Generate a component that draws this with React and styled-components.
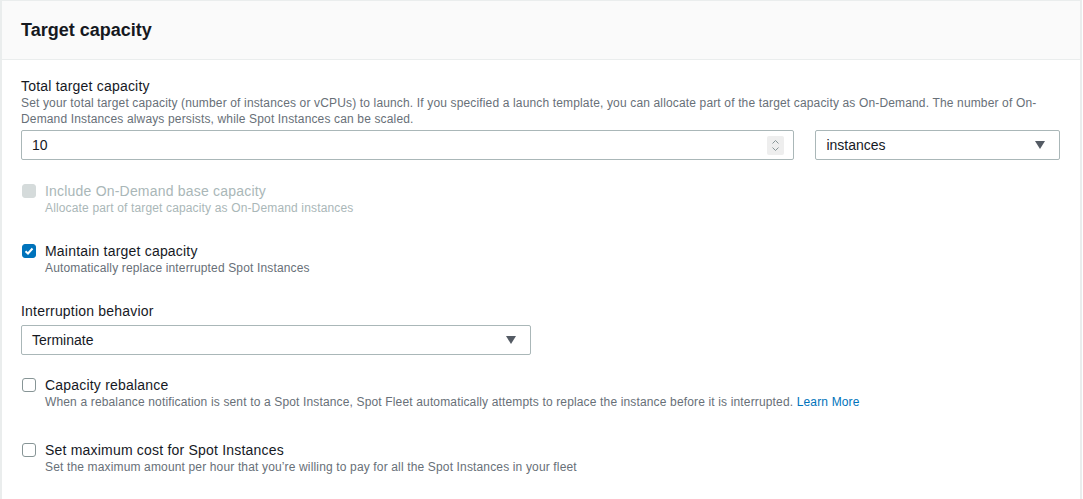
import styled, { createGlobalStyle } from "styled-components";

const GlobalStyle = createGlobalStyle`
  html, body {
    margin: 0;
    padding: 0;
    background: #ffffff;
  }
  body {
    font-family: "Liberation Sans", Arial, sans-serif;
    color: #16191f;
  }
`;

const Panel = styled.section`
  width: 1082px;
  height: 499px;
  box-sizing: border-box;
  border: 1px solid #eaeded;
  border-left-width: 2px;
  border-right-width: 2px;
  border-bottom: none;
  overflow: hidden;
`;

const Header = styled.header`
  height: 59px;
  box-sizing: border-box;
  background: #fafafa;
  border-bottom: 1px solid #eaeded;
  padding: 0 19px;
  display: flex;
  align-items: center;
`;

const Title = styled.h2`
  margin: 0;
  font-size: 18px;
  font-weight: 700;
  color: #16191f;
`;

const Body = styled.div`
  padding: 17px 20px 0 19px;
  display: flex;
  flex-direction: column;
`;

const Field = styled.div`
  display: flex;
  flex-direction: column;
  margin-bottom: ${(p) => p.gap || 0}px;
`;

const Label = styled.div`
  font-size: 14px;
  line-height: 18px;
  letter-spacing: 0.2px;
  color: #16191f;
`;

const Hint = styled.div`
  font-size: 12px;
  line-height: 16px;
  letter-spacing: 0.15px;
  color: #687078;
`;

const InputRow = styled.div`
  display: flex;
  gap: 21px;
  margin-top: ${(p) => p.top || 3}px;
`;

const Box = styled.div`
  height: 30px;
  box-sizing: border-box;
  border: 1px solid #aab7b8;
  border-radius: 2px;
  display: flex;
  align-items: center;
  justify-content: space-between;
  padding: 0 10px;
  font-size: 14px;
  color: #16191f;
  width: ${(p) => p.w}px;
  background: #fff;
`;

const Spinner = styled.span`
  width: 17px;
  height: 19px;
  background: #eeeeee;
  border-radius: 2px;
  display: flex;
  align-items: center;
  justify-content: center;
  margin-right: -1px;
`;

const Arrow = styled.span`
  width: 0;
  height: 0;
  border-left: 5px solid transparent;
  border-right: 5px solid transparent;
  border-top: 8px solid #545b64;
  margin-right: 4px;
`;

const CheckRow = styled.label`
  display: flex;
  gap: 9px;
  align-items: flex-start;
  margin-bottom: ${(p) => p.gap || 0}px;
`;

const Check = styled.span`
  flex: none;
  width: 14px;
  height: 14px;
  box-sizing: border-box;
  margin-top: 2px;
  margin-left: 1px;
  border-radius: 3px;
  display: flex;
  align-items: center;
  justify-content: center;
  border: ${(p) =>
    p.checked ? "1px solid #0073bb" : p.disabled ? "1px solid #d5dbdb" : "1px solid #879596"};
  background: ${(p) => (p.checked ? "#0073bb" : p.disabled ? "#d5dbdb" : "#fff")};
`;

const CheckText = styled.div`
  display: flex;
  flex-direction: column;
  ${Label}, ${Hint} {
    color: ${(p) => (p.disabled ? "#aab7b8" : undefined)};
  }
`;

const Link = styled.a`
  color: #0073bb;
  text-decoration: none;
`;

function Checkbox({ checked, disabled, label, hint, gap }) {
  return (
    <CheckRow gap={gap}>
      <Check checked={checked} disabled={disabled}>
        {checked && (
          <svg width="10" height="10" viewBox="0 0 10 10">
            <path d="M1.5 5.2 L4 7.5 L8.5 2.5" fill="none" stroke="#fff" strokeWidth="2" />
          </svg>
        )}
      </Check>
      <CheckText disabled={disabled}>
        <Label>{label}</Label>
        <Hint>{hint}</Hint>
      </CheckText>
    </CheckRow>
  );
}

export default function App() {
  return (
    <>
      <GlobalStyle />
      <Panel>
        <Header>
          <Title>Target capacity</Title>
        </Header>
        <Body>
          <Field gap={22}>
            <Label>Total target capacity</Label>
            <Hint>
              Set your total target capacity (number of instances or vCPUs) to launch. If you specified a
              launch template, you can allocate part of the target capacity as On-Demand. The number of On-Demand
              Instances always persists, while Spot Instances can be scaled.
            </Hint>
            <InputRow top={3}>
              <Box w={775}>
                <span>10</span>
                <Spinner>
                  <svg width="9" height="13" viewBox="0 0 9 13">
                    <path d="M1.5 4.5 L4.5 1.5 L7.5 4.5 M1.5 8.5 L4.5 11.5 L7.5 8.5" fill="none" stroke="#879596" strokeWidth="1" />
                  </svg>
                </Spinner>
              </Box>
              <Box w={245}>
                <span>instances</span>
                <Arrow />
              </Box>
            </InputRow>
          </Field>
          <Checkbox
            disabled
            gap={26}
            label="Include On-Demand base capacity"
            hint="Allocate part of target capacity as On-Demand instances"
          />
          <Checkbox
            checked
            gap={26}
            label="Maintain target capacity"
            hint="Automatically replace interrupted Spot Instances"
          />
          <Field gap={21}>
            <Label>Interruption behavior</Label>
            <InputRow top={5}>
              <Box w={510}>
                <span>Terminate</span>
                <Arrow />
              </Box>
            </InputRow>
          </Field>
          <Checkbox
            gap={31}
            label="Capacity rebalance"
            hint={
              <>
                When a rebalance notification is sent to a Spot Instance, Spot Fleet automatically attempts to
                replace the instance before it is interrupted. <Link href="#">Learn More</Link>
              </>
            }
          />
          <Checkbox
            label="Set maximum cost for Spot Instances"
            hint="Set the maximum amount per hour that you’re willing to pay for all the Spot Instances in your fleet"
          />
        </Body>
      </Panel>
    </>
  );
}
